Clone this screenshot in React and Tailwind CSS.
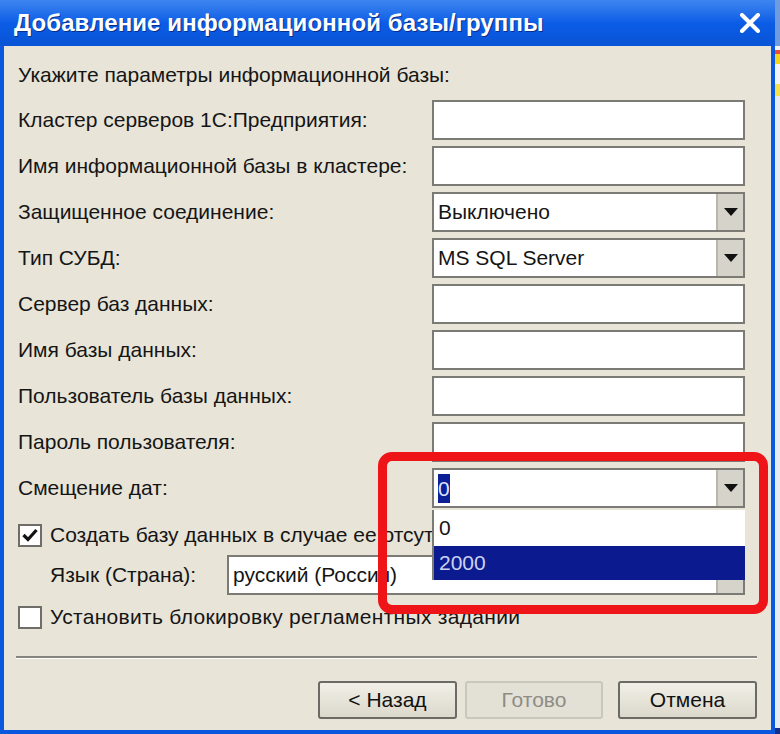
const rows = [
    { label: 'Кластер серверов 1С:Предприятия:', type: 'input' },
    { label: 'Имя информационной базы в кластере:', type: 'input' },
    { label: 'Защищенное соединение:', type: 'select', value: 'Выключено' },
    { label: 'Тип СУБД:', type: 'select', value: 'MS SQL Server' },
    { label: 'Сервер баз данных:', type: 'input' },
    { label: 'Имя базы данных:', type: 'input' },
    { label: 'Пользователь базы данных:', type: 'input' },
    { label: 'Пароль пользователя:', type: 'input' },
    { label: 'Смещение дат:', type: 'offset' },
];

function Arrow() {
    return (
        <div className="w-[27px] h-full flex items-center justify-center bg-[#d6d3ca] border-l-2 border-[#b9b6ad]">
            <svg width="14" height="8" viewBox="0 0 14 8">
                <path d="M0,0 L14,0 L7,8 Z" fill="#111" />
            </svg>
        </div>
    );
}

function Field({ type, value }) {
    return (
        <div className="w-[313px] h-[40px] flex border-2 border-[#7c7a74] bg-white">
            <div className="flex-1 flex items-center pl-[4px] overflow-hidden">
                {type === 'select' && <span>{value}</span>}
                {type === 'offset' && (
                    <span className="w-[12px] h-[29px] overflow-hidden bg-[#0b1f96] text-[#dfe3ff] leading-[29px]">0</span>
                )}
            </div>
            {type !== 'input' && <Arrow />}
        </div>
    );
}

function Check({ checked }) {
    return (
        <div className="w-[24px] h-[23px] border-2 border-[#6f6d68] bg-white flex items-center justify-center">
            {checked && (
                <svg width="16" height="14" viewBox="0 0 16 14">
                    <path d="M1.5,7 L6,11.5 L14.5,2" stroke="#111" strokeWidth="3.2" fill="none" />
                </svg>
            )}
        </div>
    );
}

function Button({ children, disabled }) {
    return (
        <div
            className={
                disabled
                    ? 'w-[138px] h-[38px] flex items-center justify-center border-2 border-[#c9c6bb] bg-[#e3e0d5] text-[#8e8c86] rounded-[3px]'
                    : 'w-[139px] h-[38px] flex items-center justify-center border-2 border-[#6c6a65] bg-gradient-to-b from-[#f1efe7] to-[#dcd8cc] text-[#111] rounded-[3px]'
            }
        >
            {children}
        </div>
    );
}

export default function App() {
    return (
        <div className="w-[780px] h-[734px] flex overflow-hidden bg-white font-['Liberation_Sans',Arial,sans-serif] text-[21px] text-[#151515]">

            <div className="w-[775px] h-full flex flex-col bg-[#0a58dd] relative">

                {/* title bar */}
                <div className="h-[46px] flex items-center justify-between pl-[14px] pr-[14px] bg-gradient-to-b from-[#3d86f0] via-[#0b5ce6] to-[#0954d6]">
                    <span className="text-white font-bold text-[24px] tracking-[0.1px] [text-shadow:1px_1px_0_#0a2f8a]">
                        Добавление информационной базы/группы
                    </span>
                    <svg width="22" height="20" viewBox="0 0 22 20">
                        <path d="M3,2 L19,18 M19,2 L3,18" stroke="white" strokeWidth="4" strokeLinecap="round" />
                    </svg>
                </div>

                {/* client area */}
                <div className="flex-1 ml-[4px] mr-[4px] mb-[4px] bg-[#e8e4d8] pl-[14px] pt-[14px] flex flex-col">

                    <div className="h-[30px] flex items-center">
                        Укажите параметры информационной базы:
                    </div>

                    <div className="mt-[10px] flex flex-col gap-[6px]">
                        {rows.map(r => (
                            <div key={r.label} className="h-[40px] flex items-center">
                                <div className="w-[414px]">{r.label}</div>
                                <Field type={r.type} value={r.value} />
                            </div>
                        ))}
                    </div>

                    <div className="mt-[7px] h-[40px] flex items-center gap-[8px]">
                        <Check checked />
                        <span className="whitespace-nowrap">Создать базу данных в случае ее отсутствия</span>
                    </div>

                    <div className="h-[40px] flex items-center pl-[32px]">
                        <div className="w-[177px]">Язык (Страна):</div>
                        <div className="w-[518px] h-[40px] flex border-2 border-[#7c7a74] bg-white">
                            <div className="flex-1 flex items-center pl-[4px]">русский (Россия)</div>
                            <Arrow />
                        </div>
                    </div>

                    <div className="mt-[2px] h-[40px] flex items-center gap-[8px]">
                        <Check />
                        <span className="tracking-[0.3px]">Установить блокировку регламентных заданий</span>
                    </div>

                    <div className="mt-[19px] ml-[-2px] mr-[14px] h-[2px] bg-[#86847c] border-b border-white box-content" />

                    <div className="mt-[22px] flex justify-end pr-[14px]">
                        <Button>&lt; Назад</Button>
                        <div className="w-[8px]" />
                        <Button disabled>Готово</Button>
                        <div className="w-[15px]" />
                        <Button>Отмена</Button>
                    </div>
                </div>

                {/* dropdown list */}
                <div className="absolute left-[432px] top-[510px] w-[313px] h-[70px] flex flex-col bg-white border-l-2 border-[#7c7a74]">
                    <div className="h-[36px] flex items-center pl-[5px]">0</div>
                    <div className="h-[34px] flex items-center pl-[5px] bg-[#0b1b8f] text-[#cdd2f0]">2000</div>
                </div>

                {/* red highlight */}
                <div className="absolute left-[378px] top-[452px] w-[390px] h-[162px] border-[9px] border-[#ee1417] rounded-[14px]" />
            </div>

            {/* background app */}
            <div className="flex-1 flex flex-col bg-[#f2f4f8]">
                <div className="h-[46px] bg-[#6f9be0]" />
                <div className="h-[4px] bg-[#e84c3d] mt-[4px]" />
                <div className="h-[10px] bg-[#f3d31c]" />
                <div className="h-[20px]" />
                <div className="h-[12px] bg-[#f3e24a]" />
                <div className="flex-1 bg-[#e6ecf6]" />
                <div className="h-[6px] bg-[#10308a]" />
            </div>
        </div>
    );
}
